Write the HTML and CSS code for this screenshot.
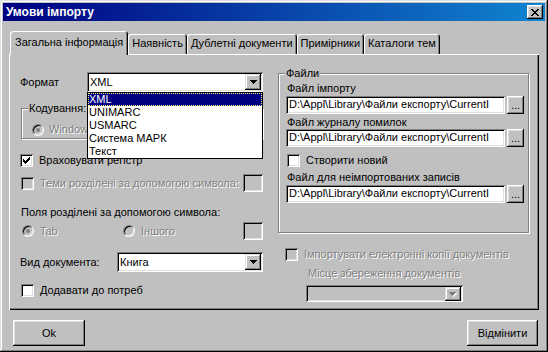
FILE: index.html
```html
<!DOCTYPE html>
<html lang="uk">
<head>
    <meta charset="UTF-8">
    <title>Умови імпорту</title>
    <link rel="stylesheet" href="styles.css">
</head>
<body>
    <div class="window">
        <div class="titlebar">
            <span class="title">Умови імпорту</span>
            <span class="close-btn">
                <svg width="8" height="7" viewBox="0 0 8 7"><path d="M0 0h2v1h1v1h2v-1h1v-1h2v1h-1v1h-1v1h-1v1h1v1h1v1h1v1h-2v-1h-1v-1h-2v1h-1v1h-2v-1h1v-1h1v-1h1v-1h-1v-1h-1v-1h-1z" fill="#000"/></svg>
            </span>
        </div>

        <div class="tabs">
            <div class="tab active">Загальна інформація</div>
            <div class="tab">Наявність</div>
            <div class="tab">Дублетні документи</div>
            <div class="tab">Примірники</div>
            <div class="tab">Каталоги тем</div>
        </div>

        <div class="panel">
            <div class="col-left">
                <div class="row format-row">
                    <span class="format-label">Формат</span>
                    <div class="combo combo-format">
                        <span class="combo-text">XML</span>
                        <span class="combo-btn"><svg width="7" height="4" viewBox="0 0 7 4"><path d="M0 0h7v1h-1v1h-1v1h-1v1h-1v-1h-1v-1h-1v-1h-1z" fill="#000"/></svg></span>
                        <ul class="dropdown">
                            <li class="selected">XML</li>
                            <li>UNIMARC</li>
                            <li>USMARC</li>
                            <li>Система МАРК</li>
                            <li>Текст</li>
                        </ul>
                    </div>
                </div>

                <div class="groupbox enc-group">
                    <span class="legend">Кодування:</span>
                    <label class="opt disabled"><span class="radio checked"></span>Windows</label>
                </div>

                <label class="opt case-check"><span class="checkbox"><svg width="7" height="7" viewBox="0 0 7 7"><path d="M0 2h1v1h1v1h1v-1h1v-1h1v-1h1v-1h1v3h-1v1h-1v1h-1v1h-1v1h-1v-1h-1v-1h-1z" fill="#000"/></svg></span>Враховувати регістр</label>

                <div class="row sep-row">
                    <label class="opt disabled"><span class="checkbox"></span>Теми розділені за допомогою символа:</label>
                    <span class="edit edit-small disabled-edit"></span>
                </div>

                <div class="text-line">Поля розділені за допомогою символа:</div>

                <div class="row radio-line">
                    <label class="opt disabled tab-opt"><span class="radio checked"></span>Tab</label>
                    <label class="opt disabled other-opt"><span class="radio"></span>Іншого</label>
                    <span class="edit edit-small disabled-edit"></span>
                </div>

                <div class="row doc-row">
                    <span class="doc-label">Вид документа:</span>
                    <div class="combo combo-doc">
                        <span class="combo-text">Книга</span>
                        <span class="combo-btn"><svg width="7" height="4" viewBox="0 0 7 4"><path d="M0 0h7v1h-1v1h-1v1h-1v1h-1v-1h-1v-1h-1v-1h-1z" fill="#000"/></svg></span>
                    </div>
                </div>

                <label class="opt needs-check"><span class="checkbox"></span>Додавати до потреб</label>
            </div>

            <div class="col-right">
                <div class="groupbox files-group">
                    <span class="legend">Файли</span>
                    <div class="field-label">Файл імпорту</div>
                    <div class="path-row">
                        <span class="edit path">D:\Appl\Library\Файли експорту\CurrentI</span>
                        <span class="browse">...</span>
                    </div>
                    <div class="field-label">Файл журналу помилок</div>
                    <div class="path-row tight">
                        <span class="edit path">D:\Appl\Library\Файли експорту\CurrentI</span>
                        <span class="browse">...</span>
                    </div>
                    <label class="opt new-check"><span class="checkbox"></span>Створити новий</label>
                    <div class="field-label">Файл для неімпортованих записів</div>
                    <div class="path-row">
                        <span class="edit path">D:\Appl\Library\Файли експорту\CurrentI</span>
                        <span class="browse">...</span>
                    </div>
                </div>

                <label class="opt disabled copies-check"><span class="checkbox"></span>Імпортувати електронні копії документів</label>
                <div class="place-label">Місце збереження документів</div>
                <div class="combo combo-place">
                    <span class="combo-text"></span>
                    <span class="combo-btn"><svg width="8" height="5" viewBox="0 0 8 5"><path d="M1 1h7v1h-1v1h-1v1h-1v1h-1v-1h-1v-1h-1v-1h-1z" fill="#fff"/><path d="M0 0h7v1h-1v1h-1v1h-1v1h-1v-1h-1v-1h-1v-1h-1z" fill="#808080"/></svg></span>
                </div>
            </div>
        </div>

        <div class="buttons">
            <button class="btn btn-ok">Ok</button>
            <button class="btn btn-cancel">Відмінити</button>
        </div>
    </div>
</body>
</html>
```

FILE: styles.css
```css
:root {
    --face: #c0c0c0;
    --shadow: #808080;
    --dark: #000000;
    --light: #dfdfdf;
    --hilight: #ffffff;
    --navy: #000080;
}

body {
    margin: 0;
    background: var(--face);
    font-family: "Liberation Sans", Arial, sans-serif;
    font-size: 11px;
    line-height: 13px;
    color: #000;
}

.window {
    width: 548px;
    height: 352px;
    box-sizing: border-box;
    padding: 3px;
    background: var(--face);
    box-shadow: inset -1px -1px var(--dark), inset 1px 1px var(--light),
                inset -2px -2px var(--shadow), inset 2px 2px var(--hilight);
}

/* title bar */
.titlebar {
    height: 18px;
    display: flex;
    align-items: center;
    justify-content: space-between;
    padding: 0 2px 0 3px;
    background: linear-gradient(to right, #000080, #1084d0);
    color: #fff;
}

.title {
    font-weight: bold;
    font-size: 12px;
}

.close-btn {
    width: 16px;
    height: 14px;
    display: flex;
    align-items: center;
    justify-content: center;
    background: var(--face);
    box-shadow: inset -1px -1px var(--dark), inset 1px 1px var(--hilight),
                inset -2px -2px var(--shadow), inset 2px 2px var(--light);
}

/* tabs */
.tabs {
    display: flex;
    align-items: flex-end;
    height: 23px;
    margin: 10px 0 0 7px;
}

.tab {
    height: 20px;
    box-sizing: border-box;
    padding: 3px 4px 0;
    border-radius: 3px 3px 0 0;
    box-shadow: inset 1px 1px var(--hilight), inset -1px 0 var(--dark), inset -2px 0 var(--shadow);
    white-space: nowrap;
}

.tab.active {
    position: relative;
    z-index: 1;
    height: 24px;
    margin-bottom: -1px;
    padding: 5px 5px 0;
    background: var(--face);
}

/* panel */
.panel {
    height: 256px;
    margin: 0 6px;
    box-sizing: border-box;
    padding: 18px 10px 0 11px;
    display: flex;
    gap: 15px;
    box-shadow: inset 1px 1px var(--hilight), inset -1px -1px var(--dark), inset -2px -2px var(--shadow);
}

.col-left {
    width: 243px;
    display: flex;
    flex-direction: column;
}

.col-right {
    width: 251px;
    display: flex;
    flex-direction: column;
}

.row {
    display: flex;
    align-items: center;
}

/* options */
.opt {
    display: flex;
    align-items: center;
    gap: 6px;
    height: 13px;
    white-space: nowrap;
}

.disabled {
    color: var(--shadow);
    text-shadow: 1px 1px 0 var(--hilight);
}

.checkbox {
    flex: none;
    width: 13px;
    height: 13px;
    box-sizing: border-box;
    display: flex;
    align-items: center;
    justify-content: center;
    background: #fff;
    box-shadow: inset 1px 1px var(--shadow), inset -1px -1px var(--hilight),
                inset 2px 2px var(--dark), inset -2px -2px var(--light);
}

.disabled .checkbox {
    background: var(--face);
}

.radio {
    flex: none;
    position: relative;
    width: 12px;
    height: 12px;
    box-sizing: border-box;
    border-radius: 50%;
    border: 1px solid;
    border-color: var(--shadow) var(--hilight) var(--hilight) var(--shadow);
    box-shadow: inset 1px 1px var(--dark), inset -1px -1px var(--light);
    background: #fff;
}

.disabled .radio {
    background: var(--face);
}

.radio.checked::after {
    content: "";
    position: absolute;
    left: 3px;
    top: 3px;
    width: 4px;
    height: 4px;
    border-radius: 50%;
    background: #000;
}

.disabled .radio.checked::after {
    background: var(--shadow);
}

/* fields */
.edit {
    display: block;
    box-sizing: border-box;
    background: #fff;
    box-shadow: inset 1px 1px var(--shadow), inset -1px -1px var(--hilight),
                inset 2px 2px var(--dark), inset -2px -2px var(--light);
}

.edit-small {
    width: 20px;
    height: 18px;
    margin-left: auto;
}

.disabled-edit {
    background: var(--face);
}

.combo {
    position: relative;
    height: 20px;
    box-sizing: border-box;
    padding: 2px;
    display: flex;
    align-items: center;
    background: #fff;
    box-shadow: inset 1px 1px var(--shadow), inset -1px -1px var(--hilight),
                inset 2px 2px var(--dark), inset -2px -2px var(--light);
}

.combo-text {
    flex: 1;
    padding-left: 1px;
}

.combo-btn {
    width: 16px;
    height: 16px;
    display: flex;
    align-items: center;
    justify-content: center;
    background: var(--face);
    box-shadow: inset -1px -1px var(--dark), inset 1px 1px var(--light),
                inset -2px -2px var(--shadow), inset 2px 2px var(--hilight);
}

.dropdown {
    position: absolute;
    top: 100%;
    left: 0;
    z-index: 2;
    width: 100%;
    box-sizing: border-box;
    margin: 0;
    padding: 0;
    list-style: none;
    background: #fff;
    border: 1px solid #000;
}

.dropdown li {
    height: 13px;
    padding-left: 1px;
}

.dropdown li.selected {
    background: var(--navy);
    color: #fff;
    outline: 1px dotted #ffff80;
    outline-offset: -1px;
}

/* group boxes */
.groupbox {
    position: relative;
    box-sizing: border-box;
    border: 1px solid var(--shadow);
    box-shadow: inset 1px 1px var(--hilight), 1px 1px var(--hilight);
}

.legend {
    position: absolute;
    top: -7px;
    left: 6px;
    padding: 0 1px;
    background: var(--face);
}

/* left column */
.format-label {
    width: 67px;
}

.combo-format {
    width: 176px;
}

.enc-group {
    height: 31px;
    margin: 16px 0 0 1px;
    padding: 14px 0 0 10px;
}

.enc-group .opt {
    gap: 5px;
}

.case-check {
    margin-top: 15px;
}

.sep-row {
    height: 18px;
    margin-top: 7px;
}

.sep-row .opt {
    margin-left: 1px;
}

.text-line {
    margin: 14px 0 0 1px;
    height: 13px;
}

.radio-line {
    height: 18px;
    margin-top: 3px;
}

.tab-opt {
    margin-left: 2px;
    width: 101px;
}

.doc-row {
    margin-top: 12px;
}

.doc-label {
    width: 97px;
}

.combo-doc {
    width: 146px;
}

.needs-check {
    margin: 12px 0 0 1px;
}

/* right column */
.files-group {
    height: 160px;
    margin-top: 1px;
    padding: 8px 0 0 8px;
}

.field-label {
    height: 13px;
    margin-top: 2px;
}

.files-group .field-label:first-of-type {
    margin-top: 0;
}

.path-row {
    display: flex;
    gap: 2px;
    margin: 1px 0 0 -1px;
}

.path-row.tight {
    margin-top: 0;
}

.path {
    width: 219px;
    height: 18px;
    padding: 2px 0 0 3px;
    overflow: hidden;
    white-space: nowrap;
}

.browse {
    width: 17px;
    height: 18px;
    box-sizing: border-box;
    padding-top: 3px;
    text-align: center;
    box-shadow: inset -1px -1px var(--dark), inset 1px 1px var(--hilight),
                inset -2px -2px var(--shadow), inset 2px 2px var(--light);
}

.new-check {
    margin-top: 7px;
}

.files-group .new-check + .field-label {
    margin-top: 4px;
}

.copies-check {
    margin: 15px 0 0 7px;
}

.place-label {
    margin: 6px 0 0 30px;
    height: 13px;
    color: var(--shadow);
    text-shadow: 1px 1px 0 var(--hilight);
}

.combo-place {
    width: 157px;
    height: 17px;
    margin: 5px 0 0 28px;
    padding: 2px 2px 1px;
    background: var(--face);
}

.combo-place .combo-btn {
    height: 14px;
}

/* bottom buttons */
.buttons {
    display: flex;
    justify-content: space-between;
    margin: 10px 7px 0 10px;
}

.btn {
    height: 26px;
    padding: 0;
    border: none;
    font: inherit;
    color: #000;
    background: var(--face);
    box-shadow: inset -1px -1px var(--dark), inset 1px 1px var(--hilight),
                inset -2px -2px var(--shadow), inset 2px 2px var(--light);
}

.btn-ok {
    width: 72px;
}

.btn-cancel {
    width: 71px;
}
```
